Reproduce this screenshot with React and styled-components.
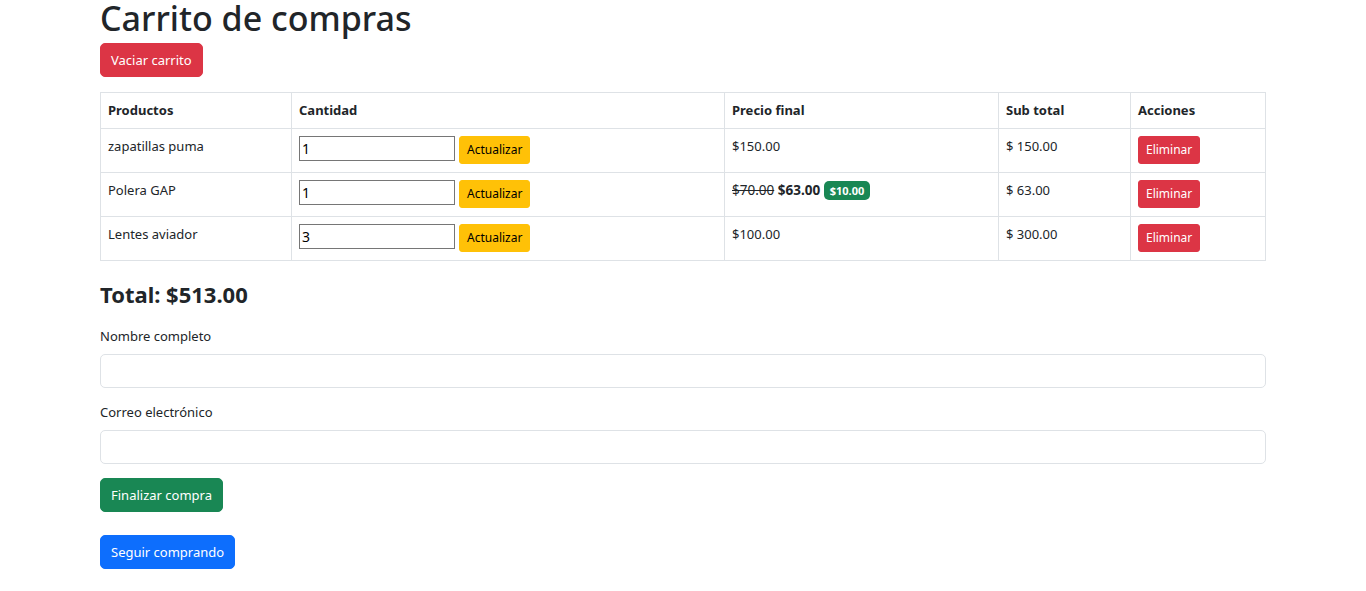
import React from "react";
import styled, { createGlobalStyle } from "styled-components";

const GlobalStyle = createGlobalStyle`
  body {
    margin: 0;
    background: #fff;
    color: #212529;
    font-family: "Noto Sans", "Open Sans", sans-serif;
    font-size: 13px;
    line-height: 21px;
  }
  * { box-sizing: border-box; }
`;

const items = [
  { name: "zapatillas puma", qty: "1", price: "$150.00", sub: "$ 150.00" },
  { name: "Polera GAP", qty: "1", old: "$70.00", price: "$63.00", off: "$10.00", sub: "$ 63.00" },
  { name: "Lentes aviador", qty: "3", price: "$100.00", sub: "$ 300.00" },
];

const App = () => {
  return (
    <>
      <GlobalStyle />
      <Page>
        <Title>Carrito de compras</Title>
        <Button $variant="danger">Vaciar carrito</Button>

        <Table>
          <colgroup>
            <col style={{ width: 191 }} />
            <col style={{ width: 433 }} />
            <col style={{ width: 274 }} />
            <col style={{ width: 132 }} />
            <col />
          </colgroup>
          <thead>
            <tr>
              <Th>Productos</Th>
              <Th>Cantidad</Th>
              <Th>Precio final</Th>
              <Th>Sub total</Th>
              <Th>Acciones</Th>
            </tr>
          </thead>
          <tbody>
            {items.map((it) => (
              <tr key={it.name}>
                <Td>{it.name}</Td>
                <Td>
                  <QtyInput defaultValue={it.qty} />
                  <SmallButton $variant="warning">Actualizar</SmallButton>
                </Td>
                <Td>
                  {it.old ? (
                    <Price>
                      <del>{it.old}</del> <strong>{it.price}</strong>{" "}
                      <Badge>{it.off}</Badge>
                    </Price>
                  ) : (
                    it.price
                  )}
                </Td>
                <Td>{it.sub}</Td>
                <Td>
                  <SmallButton $variant="danger" $flush>Eliminar</SmallButton>
                </Td>
              </tr>
            ))}
          </tbody>
        </Table>

        <Total>Total: $513.00</Total>

        <Field>
          <Label>Nombre completo</Label>
          <FormInput type="text" />
        </Field>
        <Field>
          <Label>Correo electrónico</Label>
          <FormInput type="email" />
        </Field>

        <Button $variant="success">Finalizar compra</Button>
        <Spacer />
        <Button $variant="primary">Seguir comprando</Button>
      </Page>
    </>
  );
};

export default App;

const colors = {
  danger: "#dc3545",
  warning: "#ffc107",
  success: "#198754",
  primary: "#0d6efd",
};

const Page = styled.div`
  padding: 0 100px 20px;
`;

const Title = styled.h1`
  margin: 0 0 7px;
  font-size: 34px;
  font-weight: 500;
  line-height: 36px;
`;

const Button = styled.button`
  display: inline-block;
  font-family: inherit;
  font-size: 13px;
  line-height: 20px;
  padding: 6px 10px;
  border: 1px solid ${(p) => colors[p.$variant]};
  border-radius: 5px;
  background: ${(p) => colors[p.$variant]};
  color: ${(p) => (p.$variant === "warning" ? "#000" : "#fff")};
  cursor: pointer;
`;

const SmallButton = styled(Button)`
  font-size: 12px;
  line-height: 18px;
  padding: 4px 7px;
  border-radius: 3px;
  margin-left: ${(p) => (p.$flush ? "0" : "4px")};
`;

const Table = styled.table`
  width: 100%;
  margin: 15px 0 20px;
  border-collapse: collapse;
  table-layout: fixed;
`;

const Th = styled.th`
  text-align: left;
  font-weight: 700;
  padding: 7px;
  border: 1px solid #dee2e6;
`;

const Td = styled.td`
  padding: 7px 7px 8px;
  border: 1px solid #dee2e6;
  vertical-align: top;
  white-space: nowrap;
`;

const Price = styled.span`
  font-size: 13.5px;
`;

const QtyInput = styled.input`
  width: 156px;
  height: 25px;
  font-family: inherit;
  font-size: 14px;
  padding: 1px 2px;
  border: 1px solid #767676;
  border-radius: 0;
`;

const Badge = styled.span`
  display: inline-block;
  padding: 3px 6px;
  font-size: 11px;
  font-weight: 700;
  line-height: 13px;
  color: #fff;
  background: #198754;
  border-radius: 5px;
`;

const Total = styled.h4`
  margin: 0 0 19px;
  font-size: 22px;
  font-weight: 700;
  line-height: 1.2;
`;

const Field = styled.div`
  margin-bottom: 14px;
`;

const Label = styled.label`
  display: inline-block;
  margin-bottom: 7px;
`;

const FormInput = styled.input`
  display: block;
  width: 100%;
  height: 34px;
  font-family: inherit;
  font-size: 14px;
  padding: 5px 11px;
  border: 1px solid #dee2e6;
  border-radius: 5px;
  outline: none;
`;

const Spacer = styled.div`
  height: 23px;
`;
